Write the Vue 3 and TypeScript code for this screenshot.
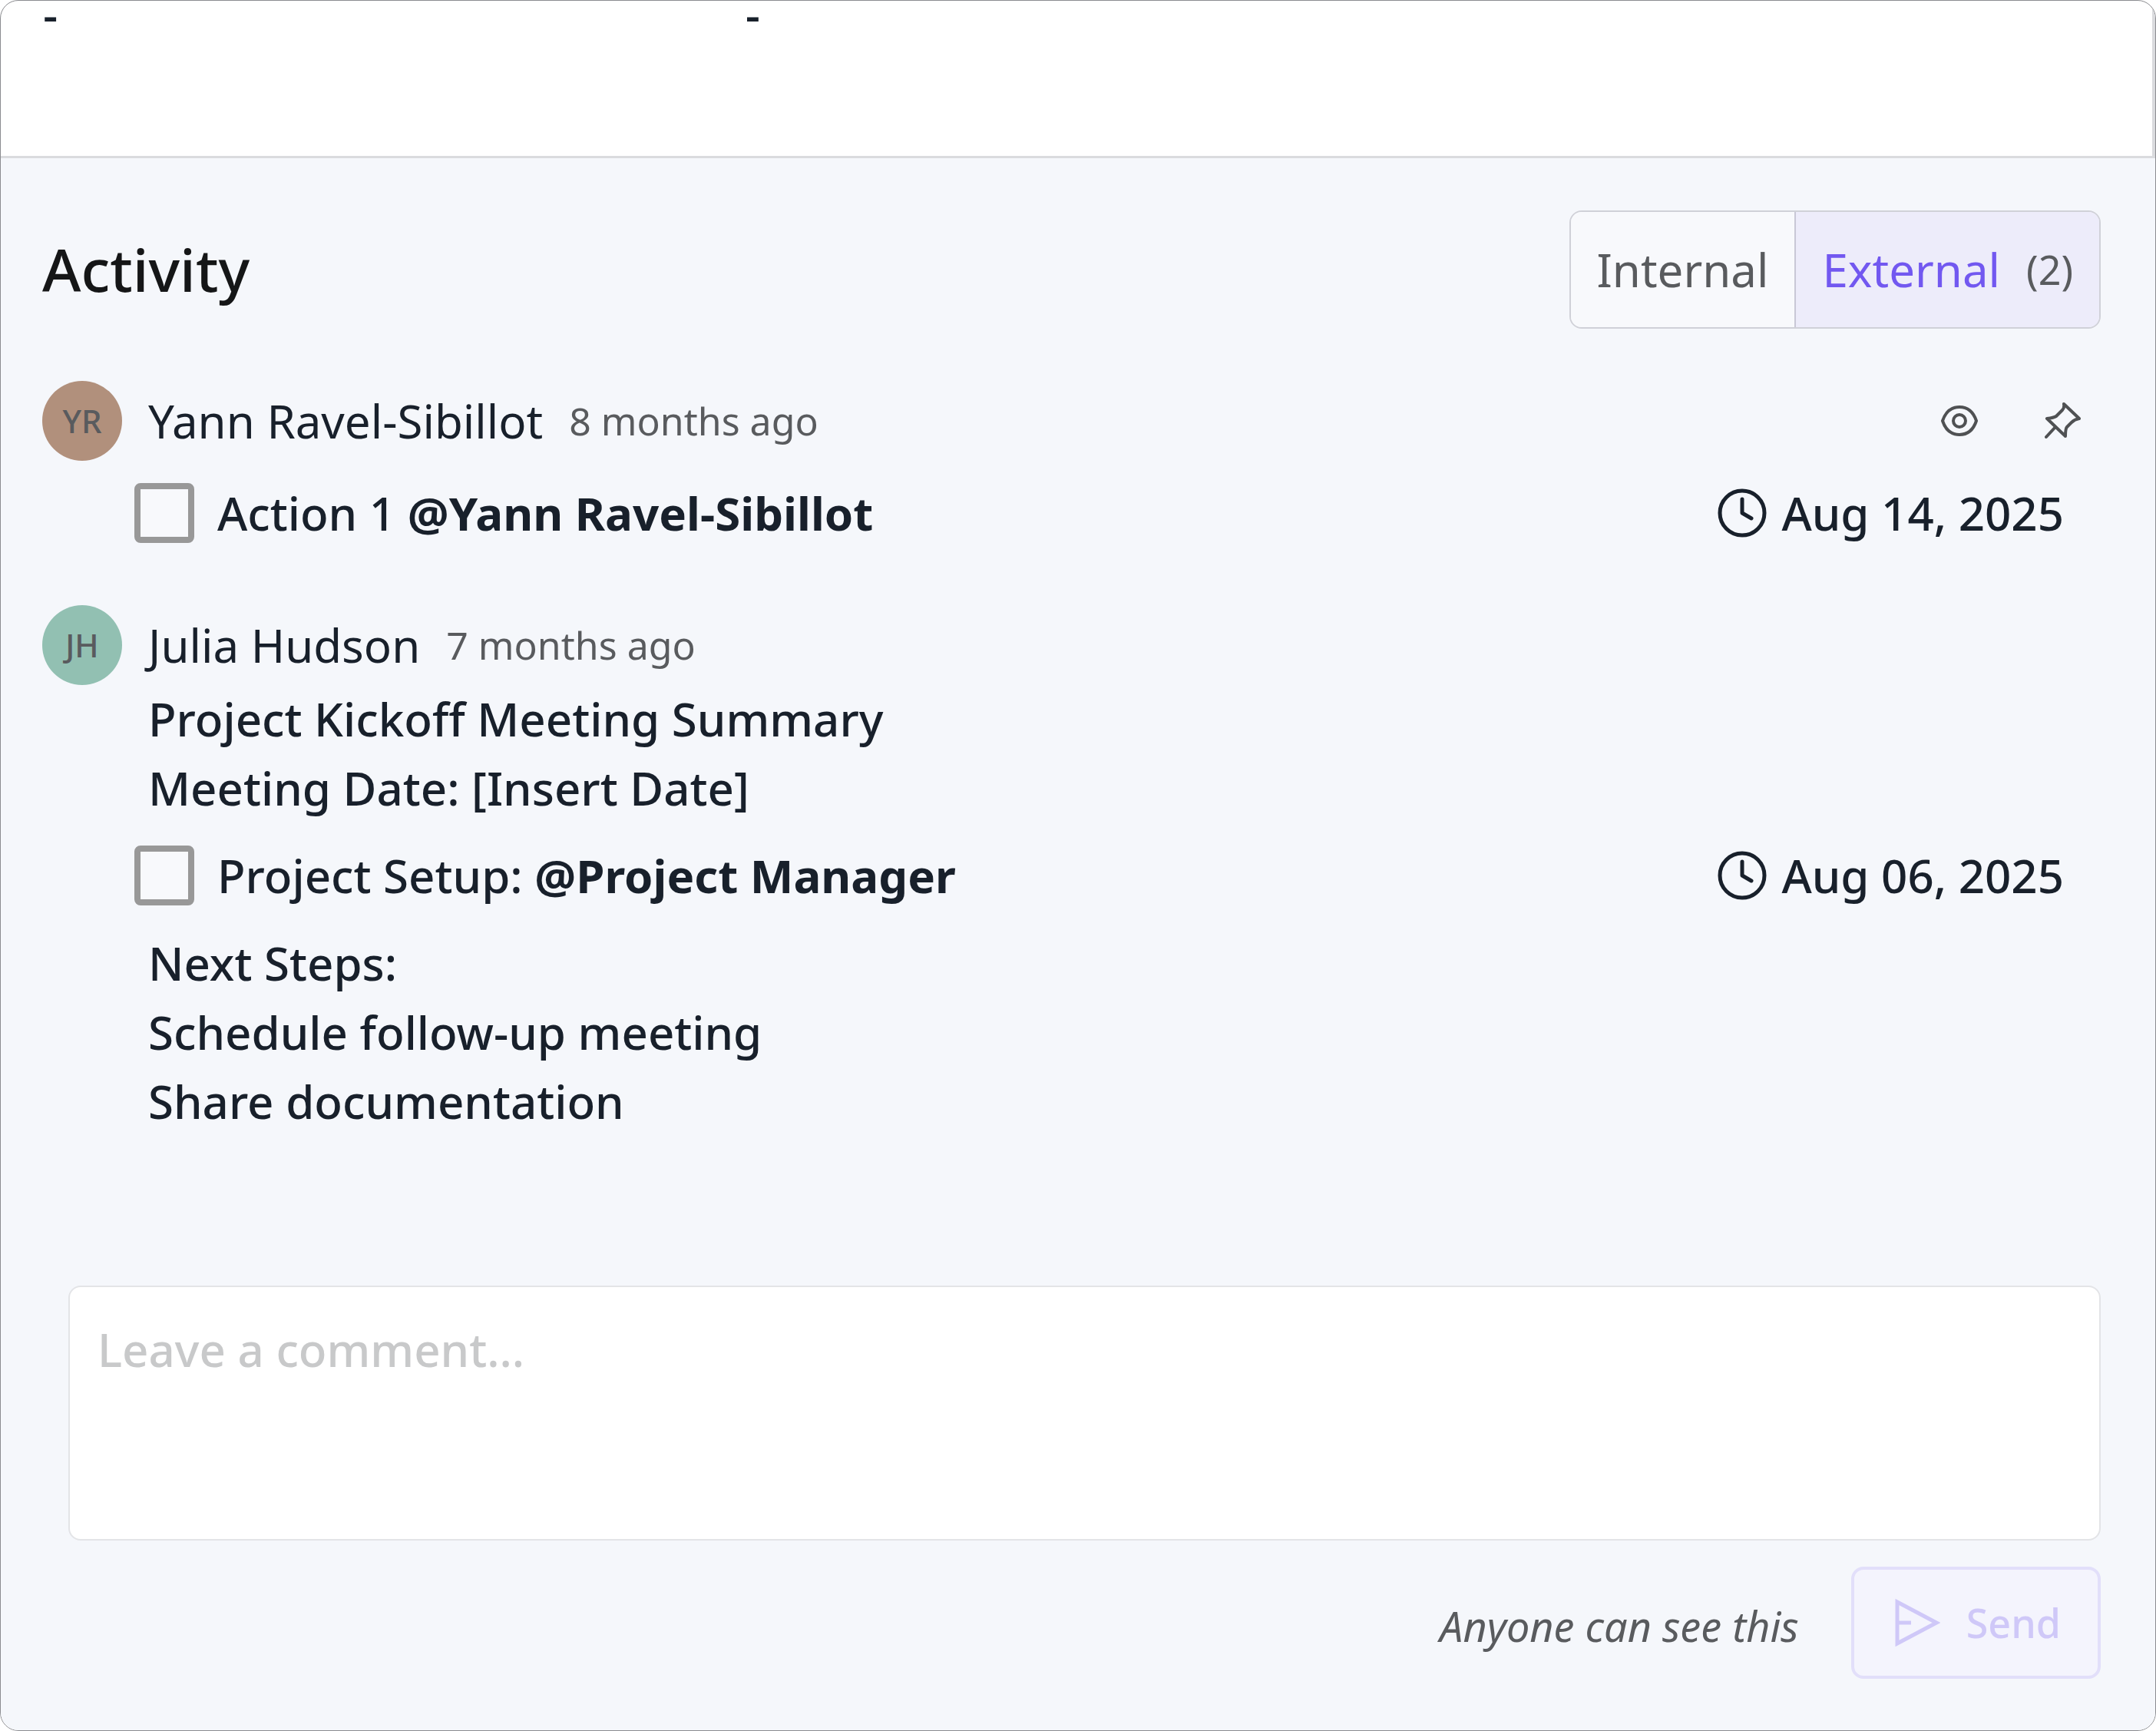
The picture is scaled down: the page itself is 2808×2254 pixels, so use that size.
<script setup lang="ts">
import { ref } from 'vue'

interface Block {
  kind: 'text' | 'task'
  text: string
  mention?: string
  due?: string
}

interface Entry {
  id: string
  initials: string
  tone: string
  author: string
  when: string
  actions: boolean
  blocks: Block[]
}

const fields = ['-', '-']
const tab = ref<'internal' | 'external'>('external')
const draft = ref('')

const entries: Entry[] = [
  {
    id: 'yr',
    initials: 'YR',
    tone: 'clay',
    author: 'Yann Ravel-Sibillot',
    when: '8 months ago',
    actions: true,
    blocks: [{ kind: 'task', text: 'Action 1', mention: '@Yann Ravel-Sibillot', due: 'Aug 14, 2025' }],
  },
  {
    id: 'jh',
    initials: 'JH',
    tone: 'mint',
    author: 'Julia Hudson',
    when: '7 months ago',
    actions: false,
    blocks: [
      { kind: 'text', text: 'Project Kickoff Meeting Summary' },
      { kind: 'text', text: 'Meeting Date: [Insert Date]' },
      { kind: 'task', text: 'Project Setup:', mention: '@Project Manager', due: 'Aug 06, 2025' },
      { kind: 'text', text: 'Next Steps:' },
      { kind: 'text', text: 'Schedule follow-up meeting' },
      { kind: 'text', text: 'Share documentation' },
    ],
  },
]
</script>

<template>
  <main class="card">
    <section class="fields">
      <span v-for="(value, i) in fields" :key="i">{{ value }}</span>
    </section>

    <section class="activity">
      <header class="head">
        <h2>Activity</h2>
        <div class="toggle" role="group" aria-label="Visibility">
          <button type="button" :class="{ on: tab === 'internal' }" :aria-pressed="tab === 'internal'" @click="tab = 'internal'">
            Internal
          </button>
          <button type="button" :class="{ on: tab === 'external' }" :aria-pressed="tab === 'external'" @click="tab = 'external'">
            External <span class="count">(2)</span>
          </button>
        </div>
      </header>

      <div class="feed">
        <article v-for="entry in entries" :key="entry.id">
          <header class="byline">
            <span class="avatar" :class="entry.tone">{{ entry.initials }}</span>
            <span class="author">{{ entry.author }}</span>
            <span class="when">{{ entry.when }}</span>
            <div v-if="entry.actions" class="actions">
              <button type="button" aria-label="Visibility">
                <svg width="48" height="48" viewBox="0 0 48 48" fill="none" stroke="#4f5153" stroke-width="4">
                  <path d="M2 24C6 12 14 6 24 6s18 6 22 18C42 36 34 42 24 42S6 36 2 24Z" stroke-linejoin="round" />
                  <circle cx="24" cy="24" r="8" />
                </svg>
              </button>
              <button type="button" aria-label="Pin">
                <svg width="48" height="48" viewBox="0 0 48 48" fill="none" stroke="#4f5153" stroke-width="4" stroke-linecap="round" stroke-linejoin="round">
                  <path d="M26 2 46 21Q40 22 36 26L30 32Q28 34 28 44L4 21Q13 20 16 18L24 10Q27 7 26 2ZM15 32 3 45" />
                </svg>
              </button>
            </div>
          </header>

          <template v-for="(block, i) in entry.blocks" :key="i">
            <p v-if="block.kind === 'text'" class="line">{{ block.text }}</p>
            <div v-else class="task">
              <input :id="`${entry.id}-${i}`" type="checkbox" />
              <label :for="`${entry.id}-${i}`">{{ block.text }} <strong>{{ block.mention }}</strong></label>
              <span class="due">
                <svg width="66" height="66" viewBox="0 0 66 66" fill="none" stroke="#18202b" stroke-width="5" stroke-linecap="round" stroke-linejoin="round">
                  <circle cx="33" cy="33" r="29" />
                  <path d="M33 15v18l12 7" />
                </svg>
                {{ block.due }}
              </span>
            </div>
          </template>
        </article>
      </div>

      <form class="composer" @submit.prevent>
        <textarea v-model="draft" aria-label="Comment" placeholder="Leave a comment..."></textarea>
        <div class="submit">
          <em>Anyone can see this</em>
          <button type="submit" class="send" :disabled="!draft">
            <svg width="60" height="64" viewBox="0 0 60 64" fill="none" stroke="currentColor" stroke-width="5">
              <path d="M4 5 55 32 4 59ZM4 32h18" />
            </svg>
            Send
          </button>
        </div>
      </form>
    </section>
  </main>
</template>

<style>
body {
  margin: 0;
  background: #fff;
}
</style>

<style scoped>
.card {
  box-sizing: border-box;
  min-height: 100vh;
  display: flex;
  flex-direction: column;
  border: 1px solid #8b8c90;
  border-radius: 24px;
  overflow: hidden;
  background: #fff;
  color: #18202b;
  font: 500 60px/90px 'Noto Sans', sans-serif;
}

button {
  font: inherit;
  color: inherit;
  margin: 0;
}

.fields {
  box-sizing: border-box;
  height: 205px;
  padding: 0 51px 0 55px;
  display: grid;
  grid-template-columns: repeat(3, 1fr);
  gap: 48px;
  line-height: 34px;
  border-right: 4px solid #dadbde;
  border-bottom: 3px solid #dadbde;
}

.activity {
  flex: 1;
  display: flex;
  flex-direction: column;
  padding: 68px 71px 67px 54px;
  background: #f5f7fb;
}

.head {
  display: flex;
  align-items: center;
  justify-content: space-between;
  margin-bottom: 69px;
}

h2 {
  margin: 0;
  font-size: 77px;
  font-weight: 500;
  color: #151617;
}

.toggle {
  display: flex;
  border: 2px solid #d0d1d8;
  border-radius: 16px;
  overflow: hidden;
  color: #595b5e;
}

.toggle button {
  display: flex;
  align-items: center;
  gap: 34px;
  height: 150px;
  padding: 0 34px;
  border: 0;
  background: #f8f9fc;
  font-weight: 400;
}

.toggle button + button {
  border-left: 2px solid #c9c8d6;
}

.toggle .on {
  background: #edecfa;
  color: #7258f0;
}

.toggle .count {
  font-size: 52px;
  color: #595b5e;
}

.feed {
  display: flex;
  flex-direction: column;
  gap: 52px;
}

.byline {
  display: flex;
  align-items: center;
  height: 102px;
}

.avatar {
  width: 104px;
  height: 104px;
  flex: none;
  border-radius: 50%;
  font-size: 42px;
  line-height: 104px;
  text-align: center;
  color: #595b5e;
}

.clay {
  background: #b1907c;
}

.mint {
  background: #92c0b2;
}

.author {
  margin-left: 34px;
  font-weight: 400;
}

.when {
  margin-left: 34px;
  font-size: 50px;
  font-weight: 400;
  color: #595b5e;
}

.actions {
  display: flex;
  gap: 86px;
  margin-left: auto;
  margin-right: 26px;
}

.actions button {
  display: flex;
  padding: 0;
  border: 0;
  background: none;
}

.line {
  margin: 0 0 0 138px;
}

.task {
  display: flex;
  align-items: center;
  height: 138px;
  padding: 0 48px 0 120px;
}

.task input {
  appearance: none;
  box-sizing: border-box;
  width: 78px;
  height: 78px;
  flex: none;
  margin: 0 30px 0 0;
  border: 8px solid #989898;
  border-radius: 8px;
  background: #f8f9fc;
}

strong {
  font-weight: 700;
}

.due {
  display: flex;
  align-items: center;
  gap: 18px;
  margin-left: auto;
}

.composer {
  display: flex;
  flex-direction: column;
  gap: 34px;
  margin: auto 0 0 34px;
}

textarea {
  display: block;
  box-sizing: border-box;
  width: 100%;
  height: 332px;
  padding: 36px;
  border: 2px solid #e3e4e7;
  border-radius: 16px;
  background: #fff;
  color: inherit;
  font: inherit;
  resize: none;
}

textarea::placeholder {
  color: #c8c9ca;
  opacity: 1;
}

.submit {
  display: flex;
  align-items: center;
  justify-content: flex-end;
  gap: 68px;
}

em {
  padding-top: 8px;
  font-size: 54px;
  font-weight: 400;
  color: #595b5e;
}

.send {
  display: flex;
  align-items: center;
  gap: 34px;
  height: 146px;
  padding: 0 48px 0 52px;
  border: 4px solid #e2dffa;
  border-radius: 16px;
  background: #f4f4fd;
  color: #cfc8f8;
  font-size: 52px;
}
</style>
